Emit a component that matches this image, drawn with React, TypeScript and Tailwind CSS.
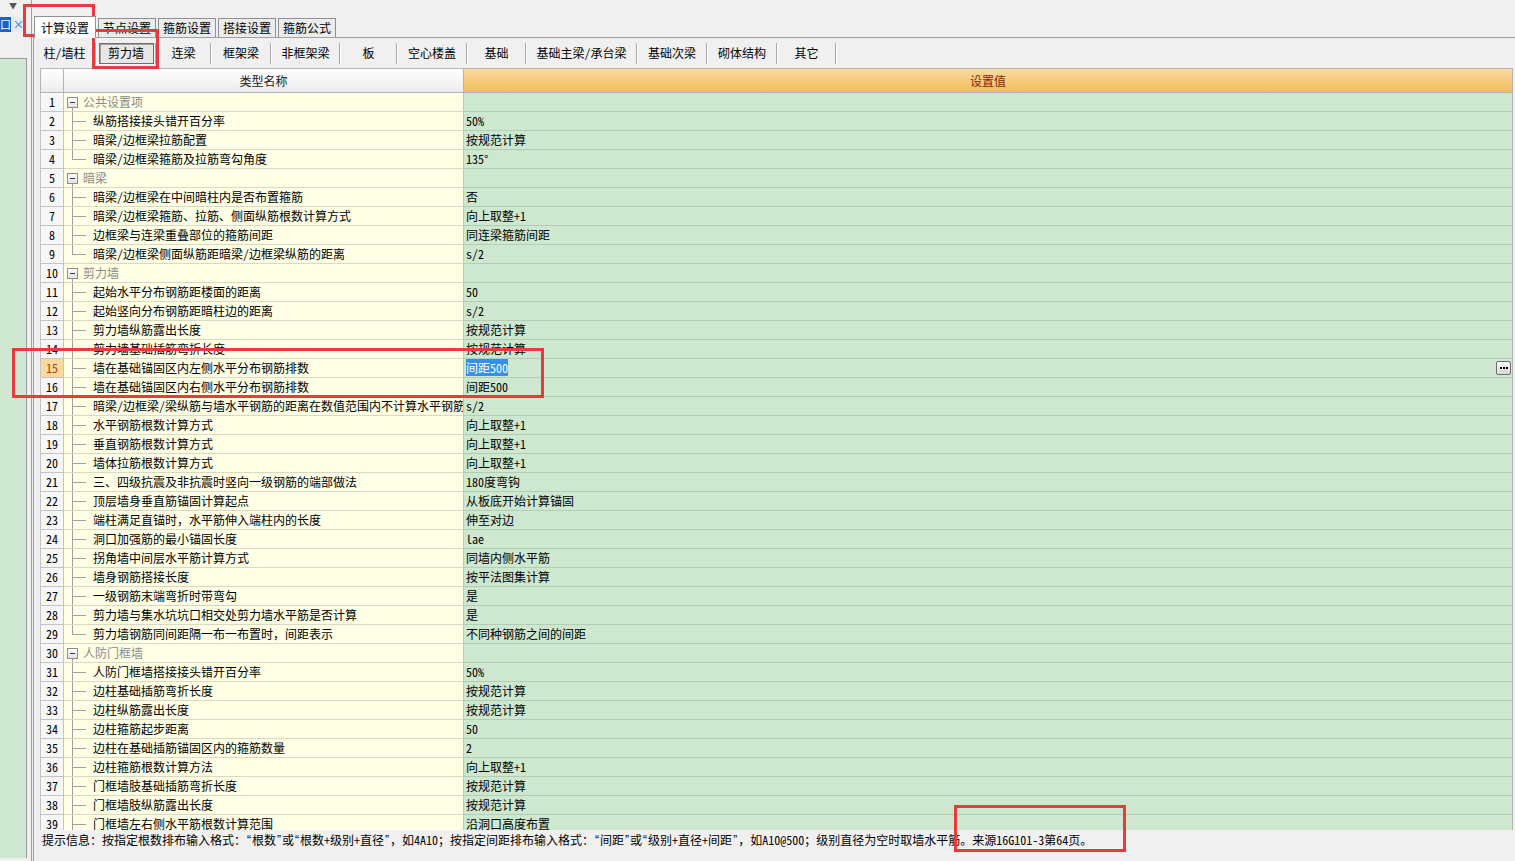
import React from 'react';

type Row = { name: string; v?: string; g?: boolean };

const rows: Row[] = [
    { name: '公共设置项', g: true },
    { name: '纵筋搭接接头错开百分率', v: '50%' },
    { name: '暗梁/边框梁拉筋配置', v: '按规范计算' },
    { name: '暗梁/边框梁箍筋及拉筋弯勾角度', v: '135°' },
    { name: '暗梁', g: true },
    { name: '暗梁/边框梁在中间暗柱内是否布置箍筋', v: '否' },
    { name: '暗梁/边框梁箍筋、拉筋、侧面纵筋根数计算方式', v: '向上取整+1' },
    { name: '边框梁与连梁重叠部位的箍筋间距', v: '同连梁箍筋间距' },
    { name: '暗梁/边框梁侧面纵筋距暗梁/边框梁纵筋的距离', v: 's/2' },
    { name: '剪力墙', g: true },
    { name: '起始水平分布钢筋距楼面的距离', v: '50' },
    { name: '起始竖向分布钢筋距暗柱边的距离', v: 's/2' },
    { name: '剪力墙纵筋露出长度', v: '按规范计算' },
    { name: '剪力墙基础插筋弯折长度', v: '按规范计算' },
    { name: '墙在基础锚固区内左侧水平分布钢筋排数', v: '间距500' },
    { name: '墙在基础锚固区内右侧水平分布钢筋排数', v: '间距500' },
    { name: '暗梁/边框梁/梁纵筋与墙水平钢筋的距离在数值范围内不计算水平钢筋', v: 's/2' },
    { name: '水平钢筋根数计算方式', v: '向上取整+1' },
    { name: '垂直钢筋根数计算方式', v: '向上取整+1' },
    { name: '墙体拉筋根数计算方式', v: '向上取整+1' },
    { name: '三、四级抗震及非抗震时竖向一级钢筋的端部做法', v: '180度弯钩' },
    { name: '顶层墙身垂直筋锚固计算起点', v: '从板底开始计算锚固' },
    { name: '端柱满足直锚时，水平筋伸入端柱内的长度', v: '伸至对边' },
    { name: '洞口加强筋的最小锚固长度', v: 'lae' },
    { name: '拐角墙中间层水平筋计算方式', v: '同墙内侧水平筋' },
    { name: '墙身钢筋搭接长度', v: '按平法图集计算' },
    { name: '一级钢筋末端弯折时带弯勾', v: '是' },
    { name: '剪力墙与集水坑坑口相交处剪力墙水平筋是否计算', v: '是' },
    { name: '剪力墙钢筋同间距隔一布一布置时，间距表示', v: '不同种钢筋之间的间距' },
    { name: '人防门框墙', g: true },
    { name: '人防门框墙搭接接头错开百分率', v: '50%' },
    { name: '边柱基础插筋弯折长度', v: '按规范计算' },
    { name: '边柱纵筋露出长度', v: '按规范计算' },
    { name: '边柱箍筋起步距离', v: '50' },
    { name: '边柱在基础插筋锚固区内的箍筋数量', v: '2' },
    { name: '边柱箍筋根数计算方法', v: '向上取整+1' },
    { name: '门框墙肢基础插筋弯折长度', v: '按规范计算' },
    { name: '门框墙肢纵筋露出长度', v: '按规范计算' },
    { name: '门框墙左右侧水平筋根数计算范围', v: '沿洞口高度布置' },
];

const tabs = ['计算设置', '节点设置', '箍筋设置', '搭接设置', '箍筋公式'];

const subs = [
    { t: '柱/墙柱', w: 'w-[63px]' },
    { t: '剪力墙', w: 'w-[60px]', active: true },
    { t: '连梁', w: 'w-[55px]' },
    { t: '框架梁', w: 'w-[60px]' },
    { t: '非框架梁', w: 'w-[69px]' },
    { t: '板', w: 'w-[57px]' },
    { t: '空心楼盖', w: 'w-[70px]' },
    { t: '基础', w: 'w-[59px]' },
    { t: '基础主梁/承台梁', w: 'w-[111px]' },
    { t: '基础次梁', w: 'w-[70px]' },
    { t: '砌体结构', w: 'w-[70px]' },
    { t: '其它', w: 'w-[59px]' },
];

// 半角引号
const Q = ({ c }: { c: string }) => (
    <span className="inline-block w-[6px] text-center font-['Liberation_Sans',sans-serif]">{c}</span>
);

const TreeCell = ({ row, idx }: { row: Row; idx: number }) => {
    const next = rows[idx + 1];
    const isLast = next ? !!next.g : false;
    if (row.g) {
        return (
            <>
                <div className="absolute left-[3px] top-[4px] w-[11px] h-[11px] border border-[#8e8e8e] bg-gradient-to-b from-white to-[#e2e2e2] flex items-center justify-center">
                    <div className="w-[5px] h-px bg-[#3a3a3a]" />
                </div>
                <div className="absolute left-[8px] top-[15px] w-px h-[4px] bg-[#a0a0a0]" />
                <span className="absolute left-[19px] top-0 text-[#8a8a8a]">{row.name}</span>
            </>
        );
    }
    return (
        <>
            <div className={`absolute left-[8px] top-0 w-px bg-[#a0a0a0] ${isLast ? 'h-[10px]' : 'h-[19px]'}`} />
            <div className="absolute left-[8px] top-[9px] w-[14px] h-px bg-[#a0a0a0]" />
            <span className="absolute left-[29px] top-0 whitespace-nowrap">{row.name}</span>
        </>
    );
};

export default function App() {
    return (
        <div className="w-[1515px] h-[861px] bg-[#f0f0f0] flex relative overflow-hidden text-[12px] leading-[18px] text-black font-['Noto_Sans_Mono_CJK_SC','Noto_Sans_CJK_SC',monospace]">
            {/* 左侧栏 */}
            <div className="w-[32px] shrink-0 border-r border-[#a0a0a0] flex flex-col">
                <div className="h-[14px] pl-[9px] text-[8px] leading-[12px] text-[#555]">▼</div>
                <div className="h-[3px]" />
                <div className="h-[15px] flex items-center">
                    <div className="w-[11px] h-[15px] bg-[#1d5fd6] text-white text-[11px] leading-[15px] overflow-hidden">口</div>
                    <div className="w-[15px] h-[15px] bg-[#e4ecf8] text-[#1d5fd6] text-[11px] leading-[15px] text-center">×</div>
                </div>
                <div className="h-[26px]" />
                <div className="w-[27px] h-[800px] border-t border-r border-[#9a9a9a] bg-[#cfe8d2]" />
            </div>

            {/* 主区域 */}
            <div className="flex-1 pl-px flex flex-col">
                <div className="h-[38px] flex items-end pl-px gap-[2px] border-b border-[#a0a0a0]">
                    {tabs.map((t, i) =>
                        i === 0 ? (
                            <div key={t} className="h-[22px] w-[62px] -mb-px relative z-10 bg-white border border-b-0 border-[#919191] flex items-center justify-center">
                                {t}
                            </div>
                        ) : (
                            <div key={t} className="h-[19px] w-[58px] bg-[#ececec] border border-b-0 border-[#919191] flex items-center justify-center">
                                {t}
                            </div>
                        )
                    )}
                </div>

                <div className="flex-1 border-l border-[#a0a0a0] flex flex-col">
                    {/* 子分类 */}
                    <div className="h-[30px] flex items-center">
                        {subs.map((s) => (
                            <div key={s.t} className={`${s.w} h-[30px] flex items-center`}>
                                <div className="flex-1 flex items-center justify-center">
                                    {s.active ? (
                                        <div className="w-[55px] h-[21px] border border-[#6f6f6f] bg-[#e7e7e7] shadow-[inset_1px_1px_0_#a0a0a0] flex items-center justify-center">
                                            {s.t}
                                        </div>
                                    ) : (
                                        <span>{s.t}</span>
                                    )}
                                </div>
                                <div className="w-[2px] h-[21px] border-l border-[#a8a8a8] border-r border-r-white" />
                            </div>
                        ))}
                    </div>

                    {/* 表格 */}
                    <div className="ml-[6px] w-[1473px] border-t border-[#b4b4b4] flex flex-col">
                        <div className="h-[24px] flex border-b border-[#b4b4b4]">
                            <div className="w-[24px] shrink-0 border-l border-r border-[#b4b4b4] bg-gradient-to-b from-white to-[#ebebeb]" />
                            <div className="w-[400px] shrink-0 border-r border-[#b4b4b4] bg-gradient-to-b from-white to-[#ebebeb] flex items-center justify-center text-[#222]">
                                类型名称
                            </div>
                            <div className="flex-1 border-r border-[#b4b4b4] bg-gradient-to-b from-[#fbdba0] to-[#f2bb58] flex items-center justify-center text-[#8b1c0c]">
                                设置值
                            </div>
                        </div>
                        <div className="h-[737px] overflow-hidden">
                            {rows.map((r, i) => {
                                const sel = i === 14;
                                return (
                                    <div key={i} className="h-[19px] flex">
                                        <div
                                            className={`w-[24px] shrink-0 border-l border-r border-b border-[#c4c4c4] flex items-center justify-center ${
                                                sel ? 'bg-[#fdd9a0] text-[#a8400c]' : 'bg-[#f7f7f7]'
                                            }`}
                                        >
                                            {i + 1}
                                        </div>
                                        <div className="w-[400px] shrink-0 relative overflow-hidden border-r border-b border-r-[#c4c4c4] border-b-[#d9d9c6] bg-[#ffffe6]">
                                            <TreeCell row={r} idx={i} />
                                        </div>
                                        <div className="flex-1 relative border-r border-b border-r-[#b4b4b4] border-b-[#b3ccb5] bg-[#cde8cf] pl-[2px] whitespace-nowrap">
                                            {sel ? (
                                                <>
                                                    <span className="bg-[#3390f0] text-white">{r.v}</span>
                                                    <div className="absolute right-[1px] top-[2px] w-[15px] h-[14px] rounded-[2px] border border-[#6e6e6e] bg-gradient-to-b from-[#fbfbfb] to-[#d8d8d8] flex items-center justify-center gap-px">
                                                        <div className="w-[2px] h-[2px] bg-black" />
                                                        <div className="w-[2px] h-[2px] bg-black" />
                                                        <div className="w-[2px] h-[2px] bg-black" />
                                                    </div>
                                                </>
                                            ) : (
                                                r.v
                                            )}
                                        </div>
                                    </div>
                                );
                            })}
                        </div>
                    </div>

                    {/* 提示信息 */}
                    <div className="h-[20px] pl-[8px] flex items-center whitespace-nowrap">
                        提示信息：按指定根数排布输入格式：<Q c="“" />根数<Q c="”" />或<Q c="“" />根数+级别+直径<Q c="”" />，如4A10；按指定间距排布输入格式：<Q c="“" />间距<Q c="”" />或<Q c="“" />级别+直径+间距<Q c="”" />，如A10@500；级别直径为空时取墙水平筋。来源16G101-3第64页。
                    </div>
                </div>
            </div>

            {/* 标注框 */}
            <div className="absolute left-[23px] top-[4px] w-[72px] h-[33px] border-[3px] border-[#e83b3b]" />
            <div className="absolute left-[92px] top-[29px] w-[67px] h-[40px] border-[3px] border-[#e83b3b]" />
            <div className="absolute left-[12px] top-[348px] w-[532px] h-[50px] border-[3px] border-[#e83b3b]" />
            <div className="absolute left-[954px] top-[805px] w-[172px] h-[47px] border-[3px] border-[#e83b3b]" />
        </div>
    );
}
